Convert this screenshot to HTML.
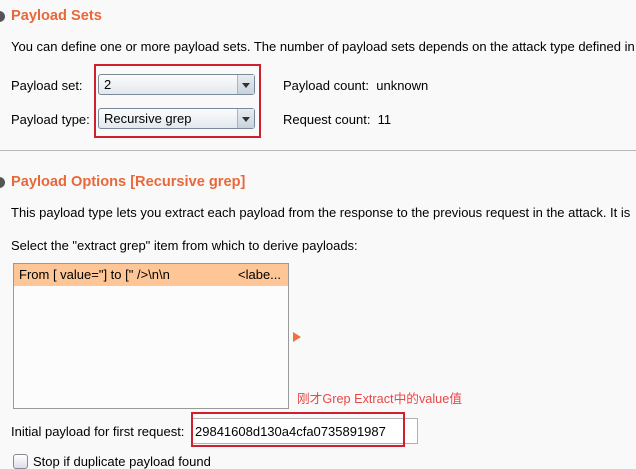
<!DOCTYPE html>
<html><head><meta charset="utf-8"><style>
body{margin:0;width:636px;height:469px;background:#f9f9f9;font-family:"Liberation Sans","Noto Sans CJK SC",sans-serif;font-size:13px;color:#000;position:relative;overflow:hidden}
.a{position:absolute;white-space:nowrap}
.h{font-weight:bold;color:#e8683a;font-size:14.6px}
.combo{position:absolute;left:98px;width:157px;height:21px;border:1px solid #7a8a99;border-radius:3px;background:linear-gradient(#fbfcfd,#e3e8ee);box-sizing:border-box}
.combo span{position:absolute;left:5px;top:2px}
.combo i{position:absolute;right:0;top:0;width:16px;height:19px;border-left:1px solid #a8b4c0;background:linear-gradient(#e8edf2,#c8d2dc)}
.combo i:after{content:"";position:absolute;left:4px;top:8px;border-left:4px solid transparent;border-right:4px solid transparent;border-top:5px solid #333}
.dot{position:absolute;left:-6px;width:11px;height:11px;border-radius:50%;background:#555}
</style></head><body>
<div class="dot" style="top:11px"></div>
<div class="a h" style="left:11px;top:8px">Payload Sets</div>
<div class="a" style="left:11px;top:39px">You can define one or more payload sets. The number of payload sets depends on the attack type defined in</div>
<div class="a" style="left:11px;top:78px">Payload set:</div>
<div class="a" style="left:11px;top:112px">Payload type:</div>
<div class="combo" style="top:74px"><span>2</span><i></i></div>
<div class="combo" style="top:108px"><span>Recursive grep</span><i></i></div>
<div class="a" style="left:94px;top:64px;width:163px;height:70px;border:2px solid #d0202e"></div>
<div class="a" style="left:283px;top:78px">Payload count:&nbsp; unknown</div>
<div class="a" style="left:283px;top:112px">Request count:&nbsp; 11</div>
<div class="a" style="left:0;top:150px;width:636px;height:1px;background:#b8b8b8"></div>
<div class="dot" style="top:177px"></div>
<div class="a h" style="left:11px;top:174px">Payload Options [Recursive grep]</div>
<div class="a" style="left:11px;top:205px">This payload type lets you extract each payload from the response to the previous request in the attack. It is</div>
<div class="a" style="left:11px;top:238px">Select the "extract grep" item from which to derive payloads:</div>
<div class="a" style="left:13px;top:263px;width:274px;height:144px;border:1px solid #9a9a9a;background:#fcfcfc"></div>
<div class="a" style="left:14px;top:264px;width:274px;height:22px;background:#fec696"></div>
<div class="a" style="left:19px;top:267px">From [ value="] to [" /&gt;\n\n</div>
<div class="a" style="left:238px;top:267px">&lt;labe...</div>
<div class="a" style="left:293px;top:332px;border-top:5px solid transparent;border-bottom:5px solid transparent;border-left:8px solid #f07040"></div>
<div class="a" style="left:297px;top:388px;color:#e84848;font-size:12.7px">刚才Grep Extract中的value值</div>
<div class="a" style="left:11px;top:424px">Initial payload for first request:</div>
<div class="a" style="left:191px;top:418px;width:227px;height:26px;border:1px solid #b0b0b0;background:#fff;box-sizing:border-box"></div>
<div class="a" style="left:191px;top:412px;width:210px;height:31px;border:2px solid #d0202e"></div>
<div class="a" style="left:195px;top:424px">29841608d130a4cfa0735891987</div>
<div class="a" style="left:13px;top:454px;width:13px;height:13px;border:1px solid #8a8a8a;border-radius:3px;background:linear-gradient(#fff,#dde)"></div>
<div class="a" style="left:33px;top:454px">Stop if duplicate payload found</div>
</body></html>
